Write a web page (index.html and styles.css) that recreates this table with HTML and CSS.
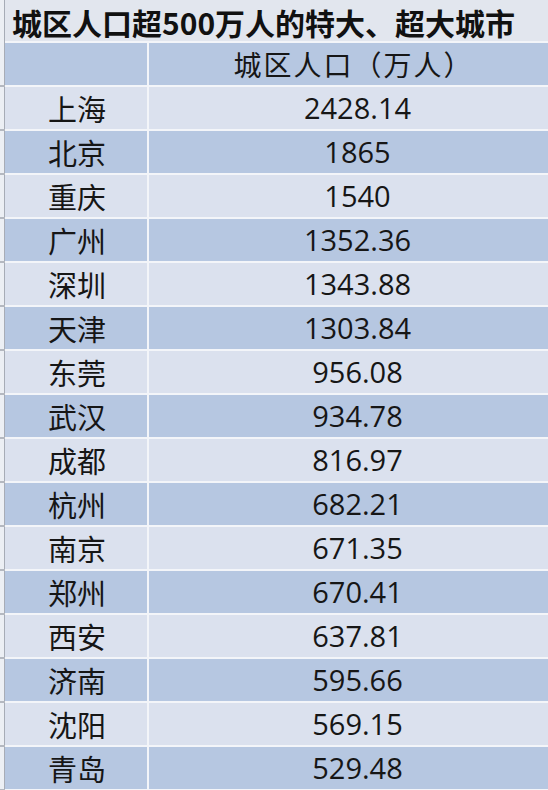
FILE: index.html
```html
<!DOCTYPE html>
<html lang="zh-CN">
<head>
<meta charset="utf-8">
<title>城区人口超500万人的特大、超大城市</title>
<link rel="stylesheet" href="styles.css">
</head>
<body>
<div class="sheet">
  <div class="row title-row"><div class="g"></div><div class="title">城区人口超500万人的特大、超大城市</div></div>
  <div class="row blue"><div class="g"></div><div class="c1"></div><div class="c2 head">城区人口（万人）</div></div>
  <div class="row light"><div class="g"></div><div class="c1">上海</div><div class="c2">2428.14</div></div>
  <div class="row blue"><div class="g"></div><div class="c1">北京</div><div class="c2">1865</div></div>
  <div class="row light"><div class="g"></div><div class="c1">重庆</div><div class="c2">1540</div></div>
  <div class="row blue"><div class="g"></div><div class="c1">广州</div><div class="c2">1352.36</div></div>
  <div class="row light"><div class="g"></div><div class="c1">深圳</div><div class="c2">1343.88</div></div>
  <div class="row blue"><div class="g"></div><div class="c1">天津</div><div class="c2">1303.84</div></div>
  <div class="row light"><div class="g"></div><div class="c1">东莞</div><div class="c2">956.08</div></div>
  <div class="row blue"><div class="g"></div><div class="c1">武汉</div><div class="c2">934.78</div></div>
  <div class="row light"><div class="g"></div><div class="c1">成都</div><div class="c2">816.97</div></div>
  <div class="row blue"><div class="g"></div><div class="c1">杭州</div><div class="c2">682.21</div></div>
  <div class="row light"><div class="g"></div><div class="c1">南京</div><div class="c2">671.35</div></div>
  <div class="row blue"><div class="g"></div><div class="c1">郑州</div><div class="c2">670.41</div></div>
  <div class="row light"><div class="g"></div><div class="c1">西安</div><div class="c2">637.81</div></div>
  <div class="row blue"><div class="g"></div><div class="c1">济南</div><div class="c2">595.66</div></div>
  <div class="row light"><div class="g"></div><div class="c1">沈阳</div><div class="c2">569.15</div></div>
  <div class="row blue"><div class="g"></div><div class="c1">青岛</div><div class="c2">529.48</div></div>
</div>
</body>
</html>
```

FILE: styles.css
```css
html, body {
  margin: 0;
  padding: 0;
  background: #f3f5f9;
}
.sheet {
  width: 548px;
  height: 790px;
  overflow: hidden;
  display: flex;
  flex-direction: column;
  gap: 2px;
  background: #f3f5f9;
  font-family: "Noto Sans CJK SC", "Noto Sans", sans-serif;
  color: #161616;
}
.row {
  display: grid;
  grid-template-columns: 5px 142px 1fr;
  height: 42px;
  flex: none;
}
.title-row {
  height: 41px;
  grid-template-columns: 5px 1fr;
  background: #e2e6ee;
}
.g {
  background: #eceff4;
  border-right: 1px solid #a7acb6;
  box-shadow: 0 2px 0 #b4b8c0;
}
.title {
  font-weight: bold;
  font-size: 30px;
  line-height: 41px;
  padding-left: 7px;
  padding-top: 2px;
  white-space: nowrap;
  color: #111;
}
.blue .c1, .blue .c2 { background: #b6c7e1; }
.light .c1, .light .c2 { background: #dbe1ee; }
.c1 {
  font-size: 29px;
  line-height: 42px;
  text-align: center;
  padding-left: 2px;
}
.c2 {
  margin-left: 2px;
  font-family: "Open Sans", "Noto Sans CJK SC", sans-serif;
  font-size: 29px;
  line-height: 42px;
  text-align: center;
  padding-left: 18px;
}
.c2.head {
  font-family: "Noto Sans CJK SC", sans-serif;
  font-size: 28px;
  letter-spacing: 2px;
  padding-left: 10px;
}
```
